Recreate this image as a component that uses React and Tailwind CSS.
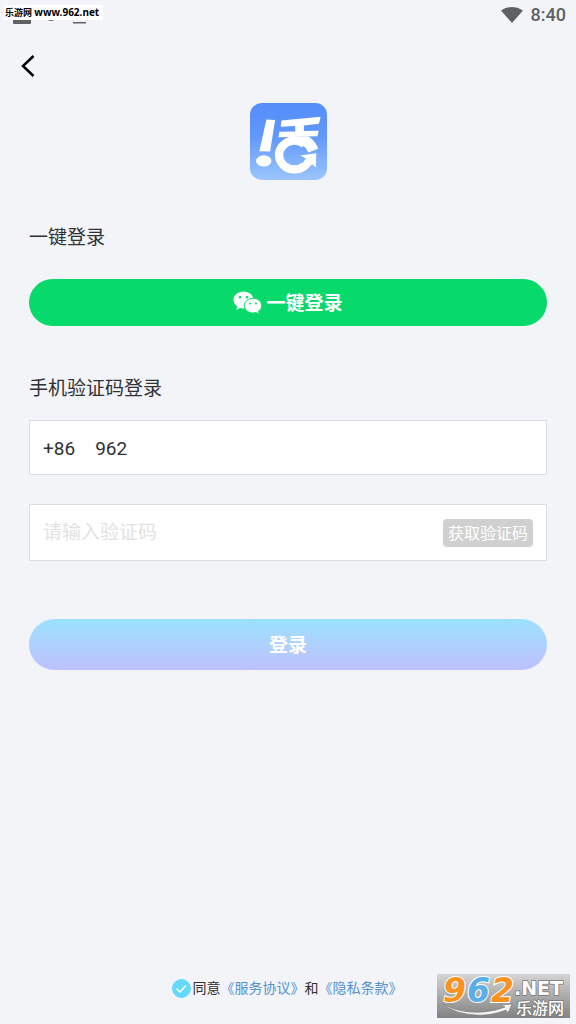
import React, { useState } from "react";

function StatusBar() {
  return (
    <header className="relative flex h-[30px] items-center justify-end gap-2 px-2.5 text-[#5f6063]">
      {/* Notification icons, half hidden by the site label */}
      <svg className="absolute left-3 top-2 h-4 w-20" viewBox="0 0 80 16" fill="currentColor" aria-hidden="true">
        <rect x="1" y="2" width="18" height="14" rx="1" />
        <circle cx="39" cy="7" r="6" />
        <rect x="61" y="14" width="13" height="1.5" />
      </svg>
      <span className="absolute left-1 top-[5px] bg-white pr-1 pl-px font-['Noto_Sans','Noto_Sans_CJK_SC',sans-serif] text-[9px] leading-[14px] font-bold whitespace-nowrap text-black">
        乐游网 <span className="text-[10px]">www.962.net</span>
      </span>
      <svg className="h-4 w-[22px]" viewBox="0 0 22 16" fill="currentColor" aria-hidden="true">
        <path d="M0 3.4Q11-3.4 22 3.4L11 16Z" />
      </svg>
      <span className="text-[18px] leading-5 font-medium">8:40</span>
    </header>
  );
}

function Logo() {
  return (
    <svg className="mx-auto h-[77px] w-[77px]" viewBox="27 24 230 230" role="img" aria-label="活">
      <defs>
        <linearGradient id="logo-bg" x1="0" y1="0" x2="0" y2="1">
          <stop offset="0" stopColor="#548dfb" />
          <stop offset="0.45" stopColor="#6299fb" />
          <stop offset="1" stopColor="#9bc5fd" />
        </linearGradient>
      </defs>
      <rect x="27" y="24" width="230" height="230" rx="35" fill="url(#logo-bg)" />
      <g fill="#fff">
        <path d="M76 73L102 75L87 169L55 168Z" />
        <ellipse cx="68" cy="197" rx="23" ry="17" />
        <path d="M121 76L238 65L233 86L188 91V108L232 107L229 123L112 126L115 110L162 109V93L119 95Z" />
        <path d="M140 124H202Q224 139 231 161L201 172Q196 157 180 149Z" />
        <path d="M177 181L225 174L224 217L212 207L198 222L183 205L194 190Z" />
      </g>
      <path d="M191 211A46 43 0 1 1 190 147" fill="none" stroke="#fff" strokeWidth="25" />
    </svg>
  );
}

function WechatIcon() {
  return (
    <svg className="h-6 w-[29px]" viewBox="0 0 29 24" aria-hidden="true">
      <path
        fill="#fff"
        d="M10.5 0.5C4.9 0.5 0.5 4.1 0.5 8.8C0.5 11.5 2 13.9 4.3 15.4L3.3 18.9L7 17C8.2 17.3 9.3 17.5 10.5 17.5C16.1 17.5 20.5 13.6 20.5 8.8C20.5 4.1 16.1 0.5 10.5 0.5Z"
      />
      <path
        fill="#fff"
        stroke="#07d96b"
        strokeWidth="1"
        d="M20 7.3C15 7.3 11.4 10.5 11.4 14.7C11.4 18.8 15 22 20 22C21 22 22 21.9 23 21.6L26.3 23.5L25.4 20.4C27.5 19.1 28.7 17.1 28.7 14.7C28.7 10.5 25 7.3 20 7.3Z"
      />
      <g fill="#07d96b">
        <circle cx="7" cy="6.3" r="1.2" />
        <circle cx="14" cy="6.3" r="1.2" />
        <circle cx="17" cy="12.5" r="1" />
        <circle cx="23" cy="12.5" r="1" />
      </g>
    </svg>
  );
}

function SiteBadge() {
  return (
    <svg className="absolute right-1.5 bottom-0 h-[60px] w-[133px]" viewBox="0 -10 133 60" role="img" aria-label="962.NET 乐游网">
      <defs>
        <linearGradient id="badge-bg" x1="0" y1="0" x2="0" y2="1">
          <stop offset="0" stopColor="#d4d4d5" />
          <stop offset="1" stopColor="#828282" />
        </linearGradient>
      </defs>
      <rect width="133" height="44" fill="url(#badge-bg)" />
      <path
        d="M6 30Q24 40 46 38Q59 37 68 33L64 31L75 30L71 39L69 36Q54 42 39 41Q18 40 6 30Z"
        fill="#f5f5f5"
        stroke="#777"
        strokeWidth="0.6"
      />
      <g
        className="font-['DejaVu_Sans',sans-serif] text-[33px] font-bold italic"
        stroke="#fff"
        strokeWidth="2"
        paintOrder="stroke"
      >
        <text x="6" y="28" fill="#f7931e">9</text>
        <text x="30" y="28" fill="#5aaee8">6</text>
        <text x="54" y="28" fill="#f7931e">2</text>
      </g>
      <g fill="#fff" stroke="#777" strokeWidth="1.5" paintOrder="stroke">
        <text x="77" y="21" className="font-['DejaVu_Sans',sans-serif] text-[19px] font-bold">.NET</text>
        <text x="79" y="40" className="font-['Noto_Sans_CJK_SC',sans-serif] text-[16px] font-medium">乐游网</text>
      </g>
    </svg>
  );
}

export default function App() {
  const [phone, setPhone] = useState("962");
  const [code, setCode] = useState("");
  const [agreed, setAgreed] = useState(true);

  return (
    <div className="relative flex min-h-screen flex-col bg-[#f2f4f8] font-['Roboto','Noto_Sans_CJK_SC',sans-serif] text-[19px] leading-7 text-[#303133]">
      <StatusBar />

      <nav className="flex h-[73px] items-center px-5 pb-0.5">
        <button type="button" aria-label="返回" className="text-black">
          <svg className="h-6 w-4" viewBox="0 0 16 24" fill="none" stroke="currentColor" strokeWidth="2.5" aria-hidden="true">
            <path d="M13.5 2L3 12L13.5 22" />
          </svg>
        </button>
      </nav>

      <main className="flex flex-1 flex-col px-[29px]">
        <Logo />

        {/* WeChat login */}
        <h2 className="mt-11">一键登录</h2>
        <button
          type="button"
          className="mt-[27px] flex h-[47px] items-center justify-center gap-1 rounded-full bg-[#07d96b] font-bold text-white"
        >
          <WechatIcon />
          <span className="pt-0.5">一键登录</span>
        </button>

        {/* Phone code login */}
        <form className="mt-[49px] flex flex-col" onSubmit={(e) => e.preventDefault()}>
          <h2>手机验证码登录</h2>
          <div className="mt-[17px] flex h-[55px] items-center gap-5 border border-[#dcdee0] bg-white px-[13px] pt-0.5">
            <label htmlFor="phone">+86</label>
            <input
              id="phone"
              type="tel"
              value={phone}
              onChange={(e) => setPhone(e.target.value)}
              className="min-w-0 flex-1 bg-transparent outline-none"
            />
          </div>
          <div className="mt-[29px] flex h-[57px] items-center gap-3 border border-[#dcdee0] bg-white px-[13px]">
            <input
              type="text"
              aria-label="验证码"
              placeholder="请输入验证码"
              value={code}
              onChange={(e) => setCode(e.target.value)}
              className="min-w-0 flex-1 bg-transparent outline-none placeholder:text-[#e2e2e2]"
            />
            <button type="button" className="h-7 rounded bg-[#d0d0d0] px-[5px] pt-0.5 text-[16px] leading-6 text-white">
              获取验证码
            </button>
          </div>
          <button
            type="submit"
            className="mt-[58px] h-[51px] rounded-full bg-linear-to-b from-[#9be1fd] to-[#bdc0fd] pt-0.5 font-bold text-white"
          >
            登录
          </button>
        </form>
      </main>

      <footer className="flex items-center justify-center pr-0.5 pb-[26px] text-[14px] leading-5">
        <span className="relative mr-0.5 flex">
          <input
            id="agree"
            type="checkbox"
            checked={agreed}
            onChange={(e) => setAgreed(e.target.checked)}
            className="peer h-[19px] w-[19px] appearance-none rounded-full border border-[#62d9fd] checked:bg-[#62d9fd]"
          />
          <svg
            className="pointer-events-none absolute inset-0 hidden h-full w-full peer-checked:block"
            viewBox="0 0 19 19"
            fill="none"
            stroke="#fff"
            strokeWidth="1.5"
            aria-hidden="true"
          >
            <path d="M4.5 9.5L8 13L14 6.5" />
          </svg>
        </span>
        <label htmlFor="agree">同意</label>
        <a href="#terms" className="text-[#5292cf]">《服务协议》</a>
        <span>和</span>
        <a href="#privacy" className="text-[#5292cf]">《隐私条款》</a>
      </footer>

      <SiteBadge />
    </div>
  );
}
